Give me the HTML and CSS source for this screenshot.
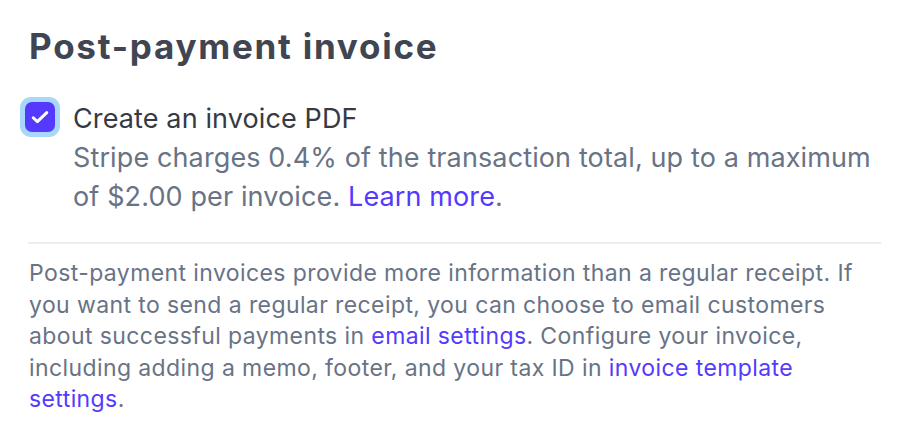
FILE: index.html
```html
<!DOCTYPE html>
<html lang="en">
<head>
    <meta charset="UTF-8">
    <meta name="viewport" content="width=device-width, initial-scale=1.0">
    <title>Post-payment invoice</title>
    <link rel="stylesheet" href="styles.css">
</head>
<body>
    <section class="panel">
        <h1>Post-payment invoice</h1>

        <label class="option">
            <span class="check-ring">
                <span class="check-box">
                    <svg viewBox="0 0 16 16">
                        <path d="M2.6 8.6l3.3 3.1L13.4 4.5" fill="none" stroke="#fff" stroke-width="2.4" stroke-linecap="round" stroke-linejoin="round"/>
                    </svg>
                </span>
            </span>
            <span class="option-text">
                <span class="option-title">Create an invoice PDF</span>
                <span class="option-desc">Stripe charges 0.4% of the transaction total, up to a maximum of $2.00 per invoice. <a href="#">Learn more</a>.</span>
            </span>
        </label>

        <hr class="divider">

        <p class="note">Post-payment invoices provide more information than a regular receipt. If you want to send a regular receipt, you can choose to email customers about successful payments in <a href="#">email settings</a>. Configure your invoice, including adding a memo, footer, and your tax ID in <a href="#">invoice template settings</a>.</p>
    </section>
</body>
</html>
```

FILE: styles.css
```css
body {
    margin: 0;
    padding: 0;
    background-color: #fff;
    font-family: Inter, "Noto Sans", sans-serif;
}

.panel {
    width: 852px;
    padding: 20px 0 0 29px;
}

h1 {
    margin: 0;
    font-size: 35px;
    line-height: 52px;
    font-weight: 700;
    color: #414552;
    letter-spacing: 1.75px;
}

a {
    color: #533afd;
    text-decoration: none;
}

.option {
    display: flex;
    gap: 13px;
    margin-top: 25px;
    margin-left: -9px;
}

.check-ring {
    flex: none;
    width: 40px;
    height: 40px;
    border-radius: 11px;
    background-color: #a9d6fb;
    display: flex;
    align-items: center;
    justify-content: center;
}

.check-box {
    width: 30px;
    height: 30px;
    border-radius: 7px;
    background-color: #533afd;
    display: flex;
    align-items: center;
    justify-content: center;
}

.check-box svg {
    width: 20px;
    height: 20px;
}

.option-text {
    display: flex;
    flex-direction: column;
    margin-top: 2px;
    font-size: 27px;
    line-height: 39px;
    letter-spacing: 0.12px;
}

.option-title {
    color: #353a44;
}

.option-desc {
    color: #687385;
}

.divider {
    border: none;
    border-top: 2px solid #ebeef1;
    margin: 26px 0 0 -1px;
}

.note {
    margin: 14px 0 0;
    font-size: 23px;
    line-height: 31.6px;
    letter-spacing: 0.4px;
    color: #687385;
}
```
